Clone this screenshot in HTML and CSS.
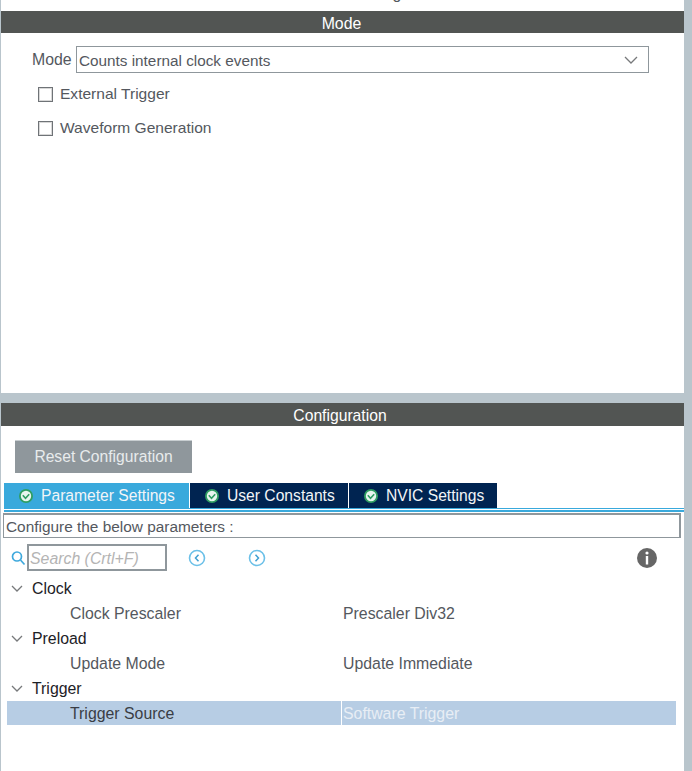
FILE: index.html
```html
<!DOCTYPE html>
<html lang="en">
<head>
  <meta charset="UTF-8">
  <title>Timer Mode and Configuration</title>
  <link rel="stylesheet" href="styles.css">
</head>
<body>
  <div class="window">
    <div class="top-title"><span>TIM2 Mode and Configuration</span></div>
    <svg class="corner-arrow" width="6" height="13" viewBox="0 0 6 13"><path d="M0 0L6 6.5L0 13Z" fill="#525553"/></svg>

    <section class="mode-panel">
      <h2 class="panel-head">Mode</h2>
      <div class="mode-row">
        <label class="mode-label">Mode</label>
        <div class="select">
          <span>Counts internal clock events</span>
          <svg width="14" height="8" viewBox="0 0 14 8"><path d="M1 1L7 7L13 1" fill="none" stroke="#77797b" stroke-width="1.3"/></svg>
        </div>
      </div>
      <div class="check-row"><span class="checkbox"></span>External Trigger</div>
      <div class="check-row"><span class="checkbox"></span>Waveform Generation</div>
    </section>

    <section class="config-panel">
      <h2 class="panel-head config-head">Configuration</h2>
      <button class="reset-btn">Reset Configuration</button>

      <div class="tabs">
        <div class="tab active">
          <svg class="ok" width="14" height="14" viewBox="0 0 14 14"><circle cx="7" cy="7" r="7" fill="#2f9e62"/><circle cx="7" cy="7" r="5.2" fill="#e8f5ee"/><path d="M3.8 6.2L6.5 9.2L10.2 5.2" fill="none" stroke="#2f9e62" stroke-width="1.6"/></svg>
          Parameter Settings
        </div>
        <div class="tab">
          <svg class="ok" width="14" height="14" viewBox="0 0 14 14"><circle cx="7" cy="7" r="7" fill="#2f9e62"/><circle cx="7" cy="7" r="5.2" fill="#e8f5ee"/><path d="M3.8 6.2L6.5 9.2L10.2 5.2" fill="none" stroke="#2f9e62" stroke-width="1.6"/></svg>
          User Constants
        </div>
        <div class="tab">
          <svg class="ok" width="14" height="14" viewBox="0 0 14 14"><circle cx="7" cy="7" r="7" fill="#2f9e62"/><circle cx="7" cy="7" r="5.2" fill="#e8f5ee"/><path d="M3.8 6.2L6.5 9.2L10.2 5.2" fill="none" stroke="#2f9e62" stroke-width="1.6"/></svg>
          NVIC Settings
        </div>
      </div>
      <div class="tab-line"></div>

      <div class="hint">Configure the below parameters :</div>

      <div class="search-row">
        <svg class="search-icon" width="15" height="16" viewBox="0 0 15 16"><circle cx="6" cy="6.5" r="4.5" fill="none" stroke="#3fa9dd" stroke-width="1.7"/><path d="M9.5 10L13.5 14.5" stroke="#3fa9dd" stroke-width="1.7"/></svg>
        <div class="search-box">Search (Crtl+F)</div>
        <svg class="nav-prev" width="18" height="18" viewBox="0 0 18 18"><circle cx="9" cy="9" r="7.5" fill="none" stroke="#6cc0e8" stroke-width="1.6"/><path d="M10.5 5.8L7.5 9L10.5 12.2" fill="none" stroke="#3f9fd2" stroke-width="1.5"/></svg>
        <svg class="nav-next" width="18" height="18" viewBox="0 0 18 18"><circle cx="9" cy="9" r="7.5" fill="none" stroke="#6cc0e8" stroke-width="1.6"/><path d="M7.5 5.8L10.5 9L7.5 12.2" fill="none" stroke="#3f9fd2" stroke-width="1.5"/></svg>
        <svg class="info" width="20" height="20" viewBox="0 0 20 20"><circle cx="10" cy="10" r="10" fill="#666666"/><circle cx="10" cy="5" r="1.6" fill="#fff"/><rect x="8.8" y="8" width="2.4" height="8.5" fill="#fff"/></svg>
      </div>

      <div class="tree">
        <div class="group"><svg width="12" height="7" viewBox="0 0 12 7"><path d="M1 1L6 6L11 1" fill="none" stroke="#77797b" stroke-width="1.3"/></svg>Clock</div>
        <div class="param"><span class="param-name">Clock Prescaler</span><span class="param-value">Prescaler Div32</span></div>
        <div class="group"><svg width="12" height="7" viewBox="0 0 12 7"><path d="M1 1L6 6L11 1" fill="none" stroke="#77797b" stroke-width="1.3"/></svg>Preload</div>
        <div class="param"><span class="param-name">Update Mode</span><span class="param-value">Update Immediate</span></div>
        <div class="group"><svg width="12" height="7" viewBox="0 0 12 7"><path d="M1 1L6 6L11 1" fill="none" stroke="#77797b" stroke-width="1.3"/></svg>Trigger</div>
        <div class="param selected"><span class="param-name">Trigger Source</span><span class="param-value">Software Trigger</span></div>
      </div>
    </section>
  </div>
</body>
</html>
```

FILE: styles.css
```css
html, body {
  margin: 0;
  padding: 0;
  background: #fff;
}
body {
  font-family: "Liberation Sans", Arial, sans-serif;
  font-size: 15.85px;
  color: #54585e;
  overflow: hidden;
}
.window {
  position: relative;
  width: 692px;
  height: 771px;
  box-sizing: border-box;
  border-left: 1px solid #b9c5cc;
  border-right: 8px solid #b9c5cc;
  overflow: hidden;
  display: flex;
  flex-direction: column;
}
.top-title {
  height: 11px;
  overflow: hidden;
  text-align: center;
  background: #fff;
  color: #54585e;
}
.top-title span {
  display: block;
  margin-top: -16px;
  line-height: 19px;
  padding-left: 5px;
}
.corner-arrow {
  position: absolute;
  left: 685px;
  top: 0;
}
.panel-head {
  margin: 0;
  height: 22px;
  line-height: 25px;
  background: #525553;
  color: #fff;
  font-size: 15.85px;
  font-weight: normal;
  text-align: center;
  padding-right: 2px;
}

.mode-panel {
  height: 382px;
  flex: none;
  background: #fff;
  border-bottom: 10px solid #b9c5cc;
}
.mode-row {
  display: flex;
  align-items: center;
  margin-top: 13px;
  padding-left: 31px;
}
.mode-label {
  width: 44px;
}
.select {
  width: 573px;
  height: 27px;
  box-sizing: border-box;
  border: 1px solid #8f979c;
  padding: 2px 10px 0 2px;
  display: flex;
  align-items: center;
  justify-content: space-between;
  font-size: 15.3px;
}
.select svg {
  margin-top: -2px;
}
.check-row {
  display: flex;
  align-items: center;
  height: 34px;
  padding-left: 37px;
  box-sizing: border-box;
  font-size: 15.55px;
}
.mode-row + .check-row {
  margin-top: 4px;
}
.checkbox {
  width: 13px;
  height: 13px;
  border: 1px solid #6f7377;
  box-shadow: inset 0 0 0 1px #d8d8d8;
  margin-right: 7px;
}

.config-panel {
  flex: 1;
  background: #fff;
  position: relative;
}
.config-head {
  height: 23px;
  line-height: 25px;
  padding-right: 5px;
  font-size: 15.7px;
}
.reset-btn {
  display: block;
  margin: 14px 0 0 14px;
  width: 177px;
  height: 33px;
  background: #8f979c;
  border: 0;
  border-top: 1px solid #c8ced1;
  color: #e8ebec;
  font-family: inherit;
  font-size: 15.65px;
}
.tabs {
  display: flex;
  margin: 10px 0 0 3px;
  height: 25px;
  font-size: 15.65px;
}
.tab {
  display: flex;
  align-items: center;
  gap: 8px;
  padding-left: 15px;
  background: #002451;
  color: #f2f5f8;
  border-right: 1px solid #fff;
  box-sizing: border-box;
  width: 159px;
  white-space: nowrap;
}
.tab.active {
  background: #39a9dc;
  width: 186px;
}
.tab:last-child {
  width: 148px;
  border-right: 0;
}
.ok {
  flex: none;
}
.tab-line {
  height: 1px;
  margin: 0 0 0 3px;
  background: #39a9dc;
  border-bottom: 1px solid #fff;
  box-shadow: 0 2px 0 #39a9dc;
}
.hint {
  margin: 3px 3px 0 2px;
  height: 25px;
  line-height: 24px;
  box-sizing: border-box;
  border: 1px solid #8f979c;
  border-top-width: 2px;
  border-right-width: 2px;
  padding-left: 2px;
  font-size: 15.4px;
}
.search-row {
  display: flex;
  align-items: center;
  height: 27px;
  margin-top: 6px;
  padding-left: 10px;
}
.search-box {
  width: 140px;
  height: 27px;
  box-sizing: border-box;
  border: 2px solid #8f979c;
  margin-left: 1px;
  padding-left: 1px;
  line-height: 25px;
  font-style: italic;
  color: #b4b4b4;
}
.nav-prev {
  margin-left: 21px;
}
.nav-next {
  margin-left: 42px;
}
.info {
  margin-left: 371px;
}
.tree {
  margin-top: 5px;
  padding-left: 6px;
  width: 669px;
}
.group {
  display: flex;
  align-items: center;
  height: 25px;
  color: #1d2126;
}
.group svg {
  margin: 0 9px 0 4px;
}
.param {
  display: flex;
  height: 25px;
  line-height: 25px;
}
.param-name {
  width: 270px;
  padding-left: 63px;
  margin-right: 1px;
}
.param-value {
  padding-left: 2px;
}
.selected {
  background: #b7cde4;
  height: 24px;
  line-height: 25px;
  color: #3a3d44;
}
.selected .param-value {
  flex: 1;
  color: #e8eef5;
  border-left: 1px solid #fff;
  padding-left: 1px;
}
```
